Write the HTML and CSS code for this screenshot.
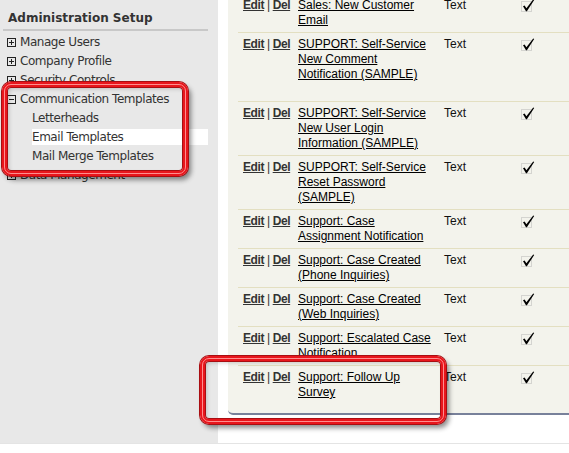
FILE: index.html
```html
<!DOCTYPE html>
<html>
<head>
<meta charset="utf-8">
<title>Email Templates</title>
<link rel="stylesheet" href="styles.css">
</head>
<body>
<div class="page">
  <aside class="sidebar">
    <h2 class="side-title">Administration Setup</h2>
    <ul class="menu">
      <li class="menu-item"><svg class="tog" viewBox="0 0 9 9"><rect x="0.5" y="0.5" width="8" height="8" fill="none" stroke="#222"/><path d="M2 4.5H7M4.5 2V7" stroke="#222"/></svg>Manage Users</li>
      <li class="menu-item"><svg class="tog" viewBox="0 0 9 9"><rect x="0.5" y="0.5" width="8" height="8" fill="none" stroke="#222"/><path d="M2 4.5H7M4.5 2V7" stroke="#222"/></svg>Company Profile</li>
      <li class="menu-item"><svg class="tog" viewBox="0 0 9 9"><rect x="0.5" y="0.5" width="8" height="8" fill="none" stroke="#222"/><path d="M2 4.5H7M4.5 2V7" stroke="#222"/></svg>Security Controls</li>
      <li class="menu-item"><svg class="tog" viewBox="0 0 9 9"><rect x="0.5" y="0.5" width="8" height="8" fill="none" stroke="#222"/><path d="M2 4.5H7" stroke="#222"/></svg>Communication Templates</li>
      <li class="menu-sub">Letterheads</li>
      <li class="menu-sub is-active">Email Templates</li>
      <li class="menu-sub">Mail Merge Templates</li>
      <li class="menu-item"><svg class="tog" viewBox="0 0 9 9"><rect x="0.5" y="0.5" width="8" height="8" fill="none" stroke="#222"/><path d="M2 4.5H7M4.5 2V7" stroke="#222"/></svg>Data Management</li>
    </ul>
  </aside>
  <main class="main">
    <div class="panel">
      <div class="row">
        <div class="c-act"><a class="act">Edit</a> | <a class="act">Del</a></div>
        <div class="c-name"><a class="name">Sales: New Customer Email</a></div>
        <div class="c-type">Text</div>
        <div class="c-chk"><svg class="chk" viewBox="0 0 15 15"><rect x="0.5" y="3.5" width="10" height="10" fill="none" stroke="#b5b5b5" stroke-dasharray="1 1"/><path d="M2 8.3L3.6 7.6L5.4 10.3L12.2 1.4L13.2 2L5.9 13.2L5 13.2Z" fill="#000"/></svg></div>
      </div>
      <div class="row row-extra">
        <div class="c-act"><a class="act">Edit</a> | <a class="act">Del</a></div>
        <div class="c-name"><a class="name">SUPPORT: Self-Service New Comment Notification (SAMPLE)</a></div>
        <div class="c-type">Text</div>
        <div class="c-chk"><svg class="chk" viewBox="0 0 15 15"><rect x="0.5" y="3.5" width="10" height="10" fill="none" stroke="#b5b5b5" stroke-dasharray="1 1"/><path d="M2 8.3L3.6 7.6L5.4 10.3L12.2 1.4L13.2 2L5.9 13.2L5 13.2Z" fill="#000"/></svg></div>
      </div>
      <div class="row">
        <div class="c-act"><a class="act">Edit</a> | <a class="act">Del</a></div>
        <div class="c-name"><a class="name">SUPPORT: Self-Service New User Login Information (SAMPLE)</a></div>
        <div class="c-type">Text</div>
        <div class="c-chk"><svg class="chk" viewBox="0 0 15 15"><rect x="0.5" y="3.5" width="10" height="10" fill="none" stroke="#b5b5b5" stroke-dasharray="1 1"/><path d="M2 8.3L3.6 7.6L5.4 10.3L12.2 1.4L13.2 2L5.9 13.2L5 13.2Z" fill="#000"/></svg></div>
      </div>
      <div class="row">
        <div class="c-act"><a class="act">Edit</a> | <a class="act">Del</a></div>
        <div class="c-name"><a class="name">SUPPORT: Self-Service Reset Password (SAMPLE)</a></div>
        <div class="c-type">Text</div>
        <div class="c-chk"><svg class="chk" viewBox="0 0 15 15"><rect x="0.5" y="3.5" width="10" height="10" fill="none" stroke="#b5b5b5" stroke-dasharray="1 1"/><path d="M2 8.3L3.6 7.6L5.4 10.3L12.2 1.4L13.2 2L5.9 13.2L5 13.2Z" fill="#000"/></svg></div>
      </div>
      <div class="row">
        <div class="c-act"><a class="act">Edit</a> | <a class="act">Del</a></div>
        <div class="c-name"><a class="name">Support: Case Assignment Notification</a></div>
        <div class="c-type">Text</div>
        <div class="c-chk"><svg class="chk" viewBox="0 0 15 15"><rect x="0.5" y="3.5" width="10" height="10" fill="none" stroke="#b5b5b5" stroke-dasharray="1 1"/><path d="M2 8.3L3.6 7.6L5.4 10.3L12.2 1.4L13.2 2L5.9 13.2L5 13.2Z" fill="#000"/></svg></div>
      </div>
      <div class="row">
        <div class="c-act"><a class="act">Edit</a> | <a class="act">Del</a></div>
        <div class="c-name"><a class="name">Support: Case Created (Phone Inquiries)</a></div>
        <div class="c-type">Text</div>
        <div class="c-chk"><svg class="chk" viewBox="0 0 15 15"><rect x="0.5" y="3.5" width="10" height="10" fill="none" stroke="#b5b5b5" stroke-dasharray="1 1"/><path d="M2 8.3L3.6 7.6L5.4 10.3L12.2 1.4L13.2 2L5.9 13.2L5 13.2Z" fill="#000"/></svg></div>
      </div>
      <div class="row">
        <div class="c-act"><a class="act">Edit</a> | <a class="act">Del</a></div>
        <div class="c-name"><a class="name">Support: Case Created (Web Inquiries)</a></div>
        <div class="c-type">Text</div>
        <div class="c-chk"><svg class="chk" viewBox="0 0 15 15"><rect x="0.5" y="3.5" width="10" height="10" fill="none" stroke="#b5b5b5" stroke-dasharray="1 1"/><path d="M2 8.3L3.6 7.6L5.4 10.3L12.2 1.4L13.2 2L5.9 13.2L5 13.2Z" fill="#000"/></svg></div>
      </div>
      <div class="row">
        <div class="c-act"><a class="act">Edit</a> | <a class="act">Del</a></div>
        <div class="c-name"><a class="name">Support: Escalated Case Notification</a></div>
        <div class="c-type">Text</div>
        <div class="c-chk"><svg class="chk" viewBox="0 0 15 15"><rect x="0.5" y="3.5" width="10" height="10" fill="none" stroke="#b5b5b5" stroke-dasharray="1 1"/><path d="M2 8.3L3.6 7.6L5.4 10.3L12.2 1.4L13.2 2L5.9 13.2L5 13.2Z" fill="#000"/></svg></div>
      </div>
      <div class="row">
        <div class="c-act"><a class="act">Edit</a> | <a class="act">Del</a></div>
        <div class="c-name"><a class="name">Support: Follow Up Survey</a></div>
        <div class="c-type">Text</div>
        <div class="c-chk"><svg class="chk" viewBox="0 0 15 15"><rect x="0.5" y="3.5" width="10" height="10" fill="none" stroke="#b5b5b5" stroke-dasharray="1 1"/><path d="M2 8.3L3.6 7.6L5.4 10.3L12.2 1.4L13.2 2L5.9 13.2L5 13.2Z" fill="#000"/></svg></div>
      </div>
    </div>
  </main>
</div>
<div class="callout callout-menu"></div>
<div class="callout callout-row"></div>
</body>
</html>
```
FILE: styles.css
```css
html, body {
  margin: 0;
  padding: 0;
  background: #fff;
  overflow: hidden;
}
body {
  width: 569px;
  height: 453px;
  position: relative;
}
.page {
  display: flex;
  height: 443px;
  border-bottom: 1px solid #e4e4e4;
}
.sidebar {
  width: 218px;
  flex: none;
  box-sizing: border-box;
  background: #e8e8e8;
  padding: 11px 10px 0 3px;
  font-family: "DejaVu Sans", Verdana, sans-serif;
  color: #333;
}
.side-title {
  margin: 0;
  padding: 0 0 3px 5px;
  font-size: 12px;
  line-height: 15px;
  font-weight: bold;
  color: #333;
  border-bottom: 2px solid #c8c8c8;
}
.menu {
  list-style: none;
  margin: 3px 0 0;
  padding: 0;
  font-size: 12px;
  letter-spacing: -0.45px;
}
.menu-item, .menu-sub {
  height: 16px;
  line-height: 16px;
  margin-bottom: 3px;
  display: flex;
  align-items: center;
  white-space: nowrap;
}
.menu-item {
  padding-left: 4px;
}
.tog {
  width: 9px;
  height: 9px;
  margin-right: 4px;
  flex: none;
}
.menu-sub {
  margin-left: 29px;
}
.menu-sub.is-active {
  background: #fff;
}
.main {
  flex: 1;
  min-width: 0;
  padding-left: 10px;
}
.panel {
  margin-top: -7px;
  background: #f3f3ec;
  padding: 0 0 9px 10px;
  border-bottom: 2px solid #78819a;
  border-bottom-left-radius: 5px;
  font-family: "Liberation Sans", Arial, sans-serif;
  font-size: 12px;
  line-height: 15px;
  color: #000;
}
.row {
  display: grid;
  grid-template-columns: 55px 145px 78px 1fr;
  border-top: 1px solid #e3dfc1;
  padding: 4px 0;
}
.row-extra {
  padding-bottom: 19px;
}
.c-act {
  padding-left: 5px;
  color: #333;
  white-space: nowrap;
  letter-spacing: -0.4px;
}
.act {
  font-weight: bold;
  color: #333;
  text-decoration: underline;
}
.c-name {
  padding-left: 5px;
}
.name {
  color: #000;
  text-decoration: underline;
}
.c-type {
  padding-left: 6px;
  color: #111;
}
.c-chk {
  padding-left: 5px;
}
.chk {
  display: block;
  width: 15px;
  height: 15px;
  margin-top: 0;
}
.callout {
  position: absolute;
  box-sizing: border-box;
  border: 5px solid #e8161c;
  border-radius: 9px;
  box-shadow: 0 0 0 1px #a80e12, inset 0 0 0 1px #a80e12, 3px 4px 5px rgba(0, 0, 0, 0.45), inset 2px 2px 4px rgba(0, 0, 0, 0.18);
}
.callout::before {
  content: "";
  position: absolute;
  top: -3px;
  left: -3px;
  right: -3px;
  bottom: -3px;
  border: 1px solid #ff8e8e;
  border-radius: 7px;
}
.callout-menu {
  left: 2px;
  top: 82px;
  width: 186px;
  height: 94px;
}
.callout-row {
  left: 200px;
  top: 356px;
  width: 246px;
  height: 68px;
}
```
